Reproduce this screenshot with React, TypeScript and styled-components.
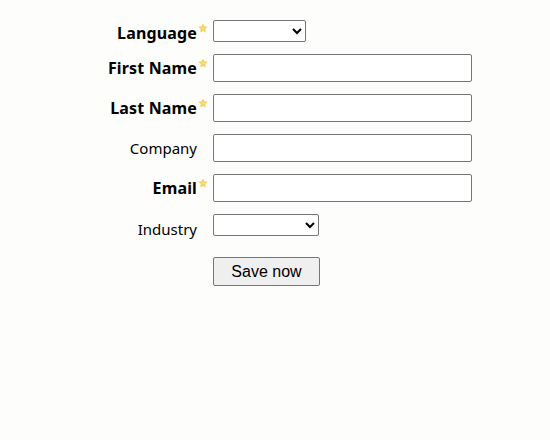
import React from "react";
import styled, { createGlobalStyle } from "styled-components";

const Global = createGlobalStyle`
  html, body { margin: 0; padding: 0; background: #fdfdfb; }
  body { margin: 8px; font-family: "Noto Sans", "Open Sans", sans-serif; color: #000; }
`;

const Form = styled.form`
  display: grid;
  grid-template-columns: 189px auto;
  column-gap: 16px;
  row-gap: 12px;
  padding-top: 12px;
  align-items: center;
  justify-items: start;
`;

const Label = styled.label<{ $required?: boolean; $drop?: number }>`
  justify-self: stretch;
  display: flex;
  justify-content: flex-end;
  align-items: flex-start;
  font-size: ${(p) => (p.$required ? 16 : 15)}px;
  letter-spacing: ${(p) => (p.$required ? "0.15px" : "0")};
  line-height: 20px;
  font-weight: ${(p) => (p.$required ? 700 : 400)};
  margin-top: ${(p) => p.$drop ?? 0}px;
  margin-bottom: ${(p) => -(p.$drop ?? 0)}px;
`;

const LabelText = styled.span`
  position: relative;
`;

const StarMark = styled.svg`
  position: absolute;
  left: 100%;
  top: 0px;
  margin-left: 1px;
  width: 10px;
  height: 10px;
`;

const TextInput = styled.input`
  box-sizing: border-box;
  width: 259px;
  height: 28px;
  border: 1px solid #767676;
  border-radius: 2px;
  background: #fff;
  font-family: "Liberation Sans", Arial, sans-serif;
  font-size: 13px;
  padding: 2px 4px;
`;

const Select = styled.select<{ $w: number }>`
  box-sizing: border-box;
  width: ${(p) => p.$w}px;
  height: 22px;
  border: 1px solid #767676;
  border-radius: 2px;
  background: #fff;
  font-family: "Liberation Sans", Arial, sans-serif;
  font-size: 13px;
`;

const ButtonRow = styled.div`
  grid-column: 2;
  margin-top: 9px;
`;

const SaveButton = styled.button`
  box-sizing: border-box;
  width: 107px;
  height: 29px;
  border: 1px solid #767676;
  border-radius: 2px;
  background: #efefef;
  color: #000;
  font-family: "Liberation Sans", Arial, sans-serif;
  font-size: 16px;
  padding: 0;
`;

const Star = () => (
  <StarMark viewBox="0 0 10 10">
    <polygon
      points="5,0.3 6.3,3.4 9.7,3.7 7.1,5.9 7.9,9.5 5,7.7 2.1,9.5 2.9,5.9 0.3,3.7 3.7,3.4"
      fill="#f4cc4f"
    />
    <circle cx="5" cy="5.3" r="1.5" fill="#f9df8e" />
  </StarMark>
);

type FieldLabelProps = {
  text: string;
  required?: boolean;
  drop?: number;
};

const FieldLabel = ({ text, required, drop }: FieldLabelProps) => (
  <Label $required={required} $drop={drop}>
    <LabelText>
      {text}
      {required && <Star />}
    </LabelText>
  </Label>
);

export default function App() {
  return (
    <>
      <Global />
      <Form onSubmit={(e) => e.preventDefault()}>
        <FieldLabel text="Language" required drop={2} />
        <Select $w={93}>
          <option></option>
        </Select>

        <FieldLabel text="First Name" required />
        <TextInput type="text" />

        <FieldLabel text="Last Name" required />
        <TextInput type="text" />

        <FieldLabel text="Company" />
        <TextInput type="text" />

        <FieldLabel text="Email" required />
        <TextInput type="text" />

        <FieldLabel text="Industry" drop={4} />
        <Select $w={106}>
          <option></option>
        </Select>

        <ButtonRow>
          <SaveButton type="submit">Save now</SaveButton>
        </ButtonRow>
      </Form>
    </>
  );
}
